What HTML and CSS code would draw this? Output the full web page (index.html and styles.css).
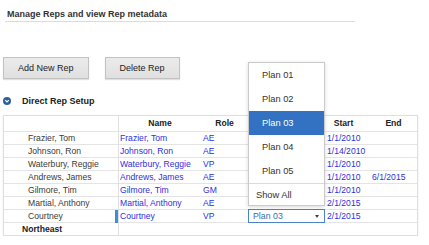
FILE: index.html
```html
<!DOCTYPE html>
<html lang="en">
<head>
    <meta charset="UTF-8">
    <title>Manage Reps</title>
    <link rel="stylesheet" href="styles.css">
</head>
<body>
    <div class="page">
        <h1 class="page-title">Manage Reps and view Rep metadata</h1>

        <div class="toolbar">
            <button class="btn">Add New Rep</button>
            <button class="btn">Delete Rep</button>
        </div>

        <h2 class="section-title">
            <svg class="toggle" width="8" height="8" viewBox="0 0 8 8">
                <circle cx="4" cy="4" r="4" fill="#2d5f9c"/>
                <path d="M2.2 3.1 L4 4.9 L5.8 3.1" fill="none" stroke="#fff" stroke-width="1.3"/>
            </svg>
            Direct Rep Setup
        </h2>

        <div class="rep-grid">
            <div class="row head">
                <div></div>
                <div class="col-name center">Name</div>
                <div class="center">Role</div>
                <div></div>
                <div class="center start">Start</div>
                <div class="center">End</div>
            </div>
            <div class="row">
                <div class="rep">Frazier, Tom</div>
                <div class="col-name link">Frazier, Tom</div>
                <div class="link">AE</div>
                <div></div>
                <div class="link">1/1/2010</div>
                <div></div>
            </div>
            <div class="row">
                <div class="rep">Johnson, Ron</div>
                <div class="col-name link">Johnson, Ron</div>
                <div class="link">AE</div>
                <div></div>
                <div class="link">1/14/2010</div>
                <div></div>
            </div>
            <div class="row">
                <div class="rep">Waterbury, Reggie</div>
                <div class="col-name link">Waterbury, Reggie</div>
                <div class="link">VP</div>
                <div></div>
                <div class="link">1/1/2010</div>
                <div></div>
            </div>
            <div class="row">
                <div class="rep">Andrews, James</div>
                <div class="col-name link">Andrews, James</div>
                <div class="link">AE</div>
                <div></div>
                <div class="link">1/1/2010</div>
                <div class="link">6/1/2015</div>
            </div>
            <div class="row">
                <div class="rep">Gilmore, Tim</div>
                <div class="col-name link">Gilmore, Tim</div>
                <div class="link">GM</div>
                <div></div>
                <div class="link">1/1/2010</div>
                <div></div>
            </div>
            <div class="row">
                <div class="rep">Martial, Anthony</div>
                <div class="col-name link">Martial, Anthony</div>
                <div class="link">AE</div>
                <div></div>
                <div class="link">2/1/2015</div>
                <div></div>
            </div>
            <div class="row">
                <div class="rep active">Courtney</div>
                <div class="col-name link">Courtney</div>
                <div class="link">VP</div>
                <div class="plan-cell">
                    <div class="plan-select">Plan 03<span class="caret"></span></div>
                    <ul class="plan-menu">
                        <li>Plan 01</li>
                        <li>Plan 02</li>
                        <li class="selected">Plan 03</li>
                        <li>Plan 04</li>
                        <li>Plan 05</li>
                        <li class="show-all">Show All</li>
                    </ul>
                </div>
                <div class="link">2/1/2015</div>
                <div></div>
            </div>
            <div class="row group">
                <div class="region">Northeast</div>
                <div class="col-name"></div>
                <div></div>
                <div></div>
                <div></div>
                <div></div>
            </div>
        </div>
    </div>
</body>
</html>
```

FILE: styles.css
```css
* {
    margin: 0;
    padding: 0;
    box-sizing: border-box;
}

body {
    font-family: 'Liberation Sans', Arial, sans-serif;
    background: white;
    color: #333;
}

.page {
    padding-top: 9px;
}

.page-title {
    margin-left: 5px;
    width: 350px;
    padding-left: 2px;
    padding-bottom: 1px;
    border-bottom: 1px solid #dcdcdc;
    font-size: 9px;
    line-height: 11px;
    font-weight: bold;
    color: #333;
}

.toolbar {
    display: flex;
    gap: 16px;
    margin: 35px 0 0 3px;
}

.btn {
    height: 22px;
    padding: 0 14px;
    font-family: inherit;
    font-size: 9px;
    color: #222;
    background: linear-gradient(#ebebeb, #e0e0e0);
    border: 1px solid #c2c2c2;
    box-shadow: 0 1px 1px rgba(0, 0, 0, 0.12);
}

.section-title {
    display: flex;
    align-items: center;
    height: 12px;
    margin: 16px 0 8px 3px;
    font-size: 9px;
    font-weight: bold;
    color: #222;
}

.toggle {
    margin-right: 11px;
}

.rep-grid {
    margin-left: 3px;
    width: 415px;
    border: 1px solid #dedede;
    box-shadow: 0 1px 2px rgba(0, 0, 0, 0.08);
    font-size: 8.6px;
}

.row {
    display: grid;
    grid-template-columns: 114px 83px 47px 77px 45px 47px;
    height: 13px;
    line-height: 13px;
    border-bottom: 1px solid #e4e4e4;
    white-space: nowrap;
}

.row > div {
    padding-left: 2px;
}

.row.head {
    height: 16px;
    line-height: 15px;
    font-weight: bold;
    font-size: 8.6px;
    color: #222;
}

.row:last-child {
    border-bottom: none;
    height: 12px;
}

.row .col-name {
    border-left: 1px solid #e0e0e0;
    padding-left: 1px;
}

.row .center {
    text-align: center;
    padding-left: 0;
}

.row .start {
    padding-right: 8px;
}

.row .rep {
    padding-left: 24px;
    color: #3a3a3a;
}

.row .rep.active {
    box-shadow: inset -3px 0 #3a8fd8;
}

.row .region {
    padding-left: 18px;
    font-weight: bold;
    color: #222;
}

.link {
    color: #2f2fe0;
}

.plan-cell {
    position: relative;
    padding-left: 0 !important;
}

.plan-select {
    position: relative;
    height: 14px;
    margin-top: -1px;
    padding-left: 4px;
    border: 1px solid #4a84c6;
    background: white;
    font-size: 8.8px;
    line-height: 12px;
    color: #3a6db0;
}

.caret {
    position: absolute;
    right: 5px;
    top: 5px;
    border-left: 2px solid transparent;
    border-right: 2px solid transparent;
    border-top: 3px solid #444;
}

.plan-menu {
    position: absolute;
    left: 0;
    bottom: calc(100% + 4px);
    width: 77px;
    list-style: none;
    background: white;
    border: 1px solid #cacaca;
    box-shadow: 0 1px 4px rgba(0, 0, 0, 0.15);
    font-size: 9.3px;
    line-height: normal;
    color: #333;
}

.plan-menu li {
    height: 24px;
    line-height: 24px;
    padding-left: 13px;
}

.plan-menu li.selected {
    background: #3372c2;
    color: white;
}

.plan-menu li.show-all {
    height: 22px;
    line-height: 22px;
    padding-left: 7px;
    border-top: 1px solid #dadada;
}
```
